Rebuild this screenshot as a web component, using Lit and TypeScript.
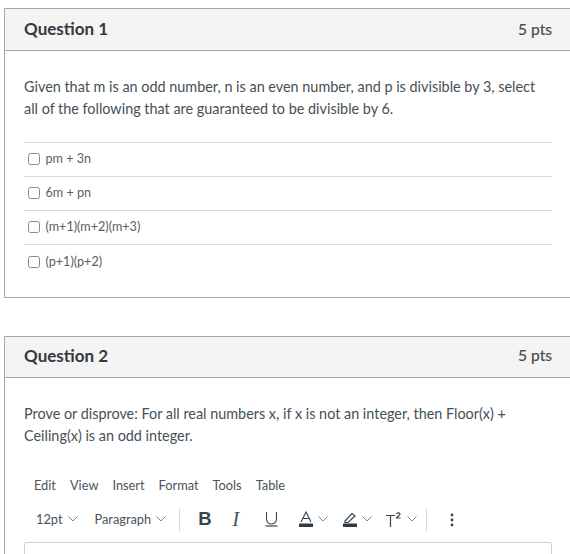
import { LitElement, html, css } from "lit";
import { customElement } from "lit/decorators.js";

const chev = html`<svg class="chev" width="10" height="6" viewBox="0 0 10 6"><path d="M.5.5 5 5 9.500.5" fill="none" stroke="#7d868c" stroke-width="1"/></svg>`;

@customElement("app-root")
export class AppRoot extends LitElement {
  static styles = css`
    :host { display: block; height: 554px; overflow: hidden; background: #fff; font-family: Lato, "Open Sans", sans-serif; color: #2d3b45; padding: 8px 0 0 4px; box-sizing: border-box; }
    .card { width: 600px; border: 1px solid #a8a8a8; border-right: none; box-sizing: border-box; }
    .q1 { height: 290px; margin-bottom: 38px; }
    .q2 { height: 300px; }
    .head { background: #f4f4f4; border-bottom: 1px solid #a8a8a8; display: flex; align-items: center; justify-content: space-between; padding: 0 52px 2px 19px; box-sizing: border-box; }
    .q1 .head { height: 42px; }
    .q2 .head { height: 41px; padding-bottom: 4px; }
    .title { font-size: 17px; font-weight: 700; color: #33393f; }
    .pts { font-size: 15.6px; font-weight: 400; color: #444b52; -webkit-text-stroke: .2px #444b52; }
    .text { width: 520px; font-size: 14.4px; line-height: 22px; color: #465057; margin: 0; padding: 25px 0 0 19px; }
    .answers { margin: 22px 0 0 19px; width: 528px; }
    .row { height: 34px; border-top: 1px solid #d9dcde; display: flex; align-items: center; box-sizing: border-box; padding: 0 0 3px 4px; gap: 6px; font-size: 12.6px; color: #566168; }
    .row:last-child { padding-bottom: 1px; }
    .box { width: 9.500px; height: 9.500px; margin-top: 2px; border: 1px solid #838c92; border-radius: 2.500px; background: #fff; flex: none; }
    .menu { display: flex; gap: 14px; margin: 29px 0 0 29px; font-size: 12.800px; color: #4a545b; height: 18px; align-items: center; }
    .tools { display: flex; align-items: center; height: 24px; margin: 13px 0 0 31px; font-size: 12.800px; color: #4a545b; }
    .sel { display: flex; align-items: center; gap: 5px; }
    .sel.b { margin-left: 17px; }
    .sep { width: 1px; height: 23px; background: #d6d9db; margin: 0 18px 0 13px; }
    .sep.end { margin: 0 23px 0 9px; }
    .icon { display: flex; align-items: center; gap: 5px; }
    .chev { flex: none; }
    .bold { font: 700 18.500px "Liberation Sans", sans-serif; color: #3a444b; width: 13px; margin-right: 21px; }
    .ital { font: italic 400 21px "Liberation Serif", serif; color: #4a545b; width: 11px; margin-right: 22px; }
    .editor { width: 528px; height: 30px; margin: 11px 0 0 19px; border: 1px solid #cfd3d6; border-radius: 2px; box-sizing: border-box; background: #fff; }
    .dots { display: flex; margin-top: 2px; }
  `;

  renderAnswer(t: string) {
    return html`<div class="row"><span class="box"></span><span>${t}</span></div>`;
  }

  render() {
    return html`
      <section class="card q1">
        <header class="head"><span class="title">Question 1</span><span class="pts">5 pts</span></header>
        <p class="text">Given that m is an odd number, n is an even number, and p is divisible by 3, select all of the following that are guaranteed to be divisible by 6.</p>
        <div class="answers">
          ${["pm + 3n", "6m + pn", "(m+1)(m+2)(m+3)", "(p+1)(p+2)"].map((t) => this.renderAnswer(t))}
        </div>
      </section>
      <section class="card q2">
        <header class="head"><span class="title">Question 2</span><span class="pts">5 pts</span></header>
        <p class="text">Prove or disprove: For all real numbers x, if x is not an integer, then Floor(x) + Ceiling(x) is an odd integer.</p>
        <nav class="menu"><span>Edit</span><span>View</span><span>Insert</span><span>Format</span><span>Tools</span><span>Table</span></nav>
        <div class="tools">
          <span class="sel">12pt ${chev}</span>
          <span class="sel b">Paragraph ${chev}</span>
          <span class="sep"></span>
          <span class="bold">B</span>
          <span class="ital">I</span>
          <span class="icon" style="margin-right:21px"><svg width="13" height="16" viewBox="0 0 13 16"><path d="M1.500 1v7a5 5 0 0 0 10 0V1" fill="none" stroke="#3a444b" stroke-width="1.100"/><path d="M.5 15h12" stroke="#3a444b" stroke-width="1.200"/></svg></span>
          <span class="icon" style="margin-right:15px"><svg width="14" height="17" viewBox="0 0 14 17"><path d="M2 11 7 1l5 10M3.800 7.500h6.400" fill="none" stroke="#3a444b" stroke-width="1.100"/><path d="M0 12.500h14V16H0z" fill="#2d3b45"/></svg>${chev}</span>
          <span class="icon" style="margin-right:14px"><svg width="14" height="17" viewBox="0 0 14 17"><path d="M2 10 9 2.500l3 2.500-7 6.500H2z" fill="none" stroke="#3a444b" stroke-width="1.200"/><path d="M0 12.500h14V16H0z" fill="#2d3b45"/></svg>${chev}</span>
          <span class="icon" style="gap:6px"><svg width="15" height="15" viewBox="0 0 15 15"><path d="M0 3.500h9M4.500 3.500V15" fill="none" stroke="#3a444b" stroke-width="1.200"/><path d="M10.500 2c.5-1.500 3.500-1.500 3.500.3 0 1.300-3 2-3.500 3.700H14.500" fill="none" stroke="#3a444b" stroke-width="1.200"/></svg>${chev}</span>
          <span class="sep end"></span>
          <span class="dots"><svg width="4" height="14" viewBox="0 0 4 14"><circle cx="2" cy="2" r="1.400" fill="#3a444b"/><circle cx="2" cy="7" r="1.400" fill="#3a444b"/><circle cx="2" cy="12" r="1.400" fill="#3a444b"/></svg></span>
        </div>
        <div class="editor"></div>
      </section>
    `;
  }
}
